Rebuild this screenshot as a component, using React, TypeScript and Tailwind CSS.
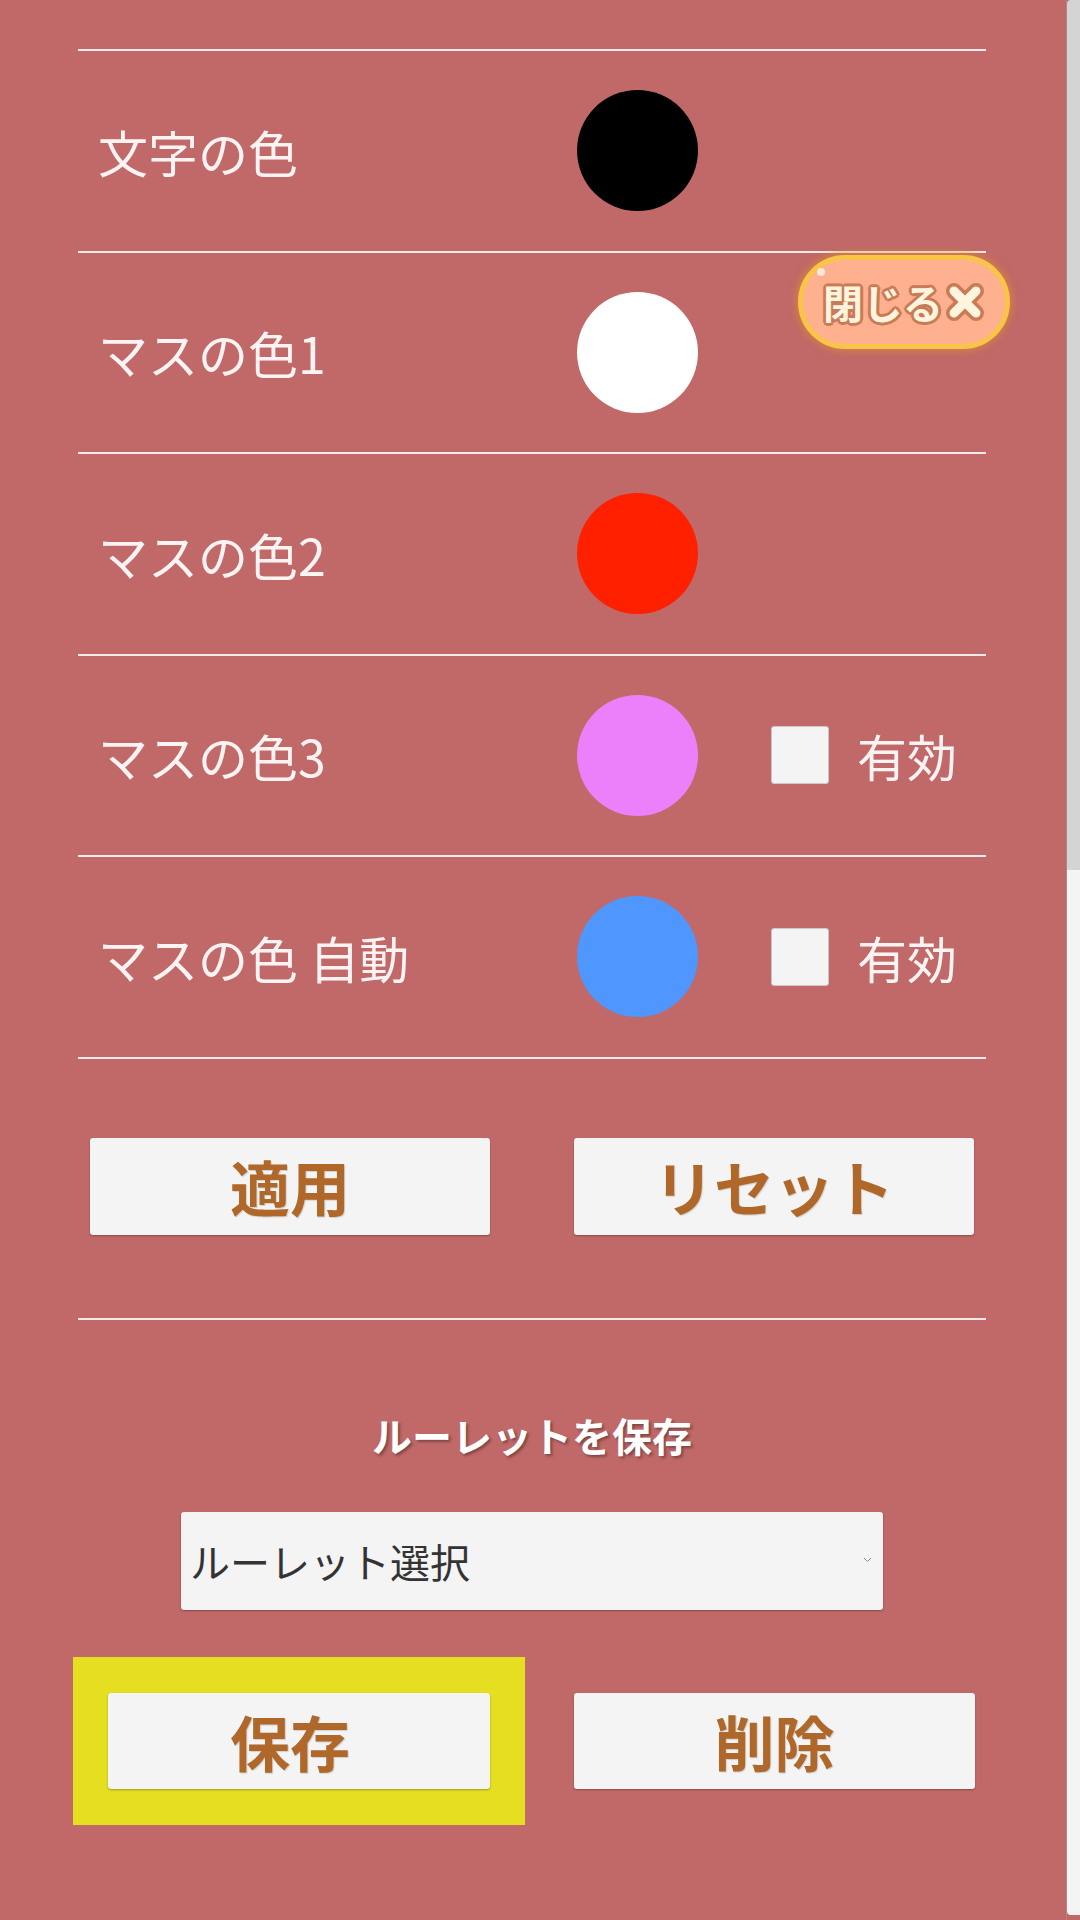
import React from 'react';

interface ColorRow {
  label: string;
  color: string;
  toggle?: boolean;
}

const rows: ColorRow[] = [
  { label: '文字の色', color: '#000000' },
  { label: 'マスの色1', color: '#ffffff' },
  { label: 'マスの色2', color: '#ff2000' },
  { label: 'マスの色3', color: '#ec7ffa', toggle: true },
  { label: 'マスの色 自動', color: '#4f97ff', toggle: true },
];

const ActionButton: React.FC<{ label: string; className?: string }> = ({ label, className = '' }) => (
  <button
    className={`flex items-center justify-center rounded-[3px] bg-[#f4f4f4] text-[60px] font-bold leading-none text-[#b0682a] shadow-[0_1px_2px_rgba(0,0,0,0.3)] [text-shadow:1px_1px_1px_rgba(0,0,0,0.15)] ${className}`}
  >
    {label}
  </button>
);

const App: React.FC = () => {
  return (
    <div className="relative flex h-[1920px] w-[1080px] overflow-hidden bg-[#c06968] font-['Noto_Sans_CJK_JP','Noto_Sans',sans-serif]">
      <div className="flex-1 pl-[78px] pr-[80px] pt-[49px]">
        <div className="h-[2px] bg-[#f7eaea]" />

        {rows.map((row) => (
          <div key={row.label} className="flex h-[201.5px] items-center border-b-2 border-[#f7eaea]">
            <div className="w-[499px] pl-[20px] text-[50px] leading-none text-[#fdf3f3]">{row.label}</div>
            <div
              className="h-[121px] w-[121px] shrink-0 rounded-full"
              style={{ backgroundColor: row.color }}
            />
            {row.toggle && (
              <div className="ml-[73px] flex items-center">
                <div className="h-[58px] w-[58px] rounded-[3px] border border-[#c9c9c9] bg-[#f4f4f4]" />
                <span className="ml-[28px] text-[50px] leading-none text-[#fdf3f3]">有効</span>
              </div>
            )}
          </div>
        ))}

        <div className="flex justify-between px-[12px] pt-[79px]">
          <ActionButton label="適用" className="h-[97px] w-[400px]" />
          <ActionButton label="リセット" className="h-[97px] w-[400px]" />
        </div>

        <div className="mt-[83px] h-[2px] bg-[#f7eaea]" />

        <div className="mt-[87px] text-center text-[40px] font-bold leading-[56px] text-white [text-shadow:2px_2px_3px_rgba(0,0,0,0.35)]">
          ルーレットを保存
        </div>

        <div className="relative mx-auto mt-[49px] h-[98px] w-[702px]">
          <select className="h-full w-full appearance-none rounded-[3px] bg-[#f4f4f4] pl-[9px] text-[40px] text-[#333333] shadow-[0_1px_2px_rgba(0,0,0,0.3)] outline-none">
            <option>ルーレット選択</option>
          </select>
          <svg className="pointer-events-none absolute right-[11px] top-[45px]" width="9" height="6" viewBox="0 0 9 6">
            <path d="M1 1l3.5 3.5L8 1" fill="none" stroke="#888" strokeWidth="1" />
          </svg>
        </div>

        <div className="ml-[-5px] mt-[47px] flex items-center">
          <div className="bg-[#e6de20] px-[35px] py-[36px]">
            <ActionButton label="保存" className="h-[96px] w-[382px] pr-[18px]" />
          </div>
          <ActionButton label="削除" className="ml-[49px] h-[96px] w-[401px]" />
        </div>
      </div>

      {/* scroll strip */}
      <div className="flex w-[14px] flex-col border-l border-[#a88a8a] pb-[5px]">
        <div className="h-[870px] rounded-tl-[4px] bg-[#d4d4d4]" />
        <div className="flex-1 rounded-bl-[4px] bg-[#f4f4f4]" />
      </div>

      {/* close overlay */}
      <button className="absolute left-[798px] top-[255px] flex h-[94px] w-[212px] items-center justify-center rounded-full border-[5px] border-[#f8c548] bg-[#ffb08e] shadow-[0_0_6px_3px_rgba(226,140,50,0.55)]">
        <span className="absolute left-[14px] top-[8px] h-[8px] w-[8px] rounded-full bg-white/70" />
        <span className="text-[40px] font-bold leading-none text-[#fff4de] [text-shadow:3px_0_0_#c97a56,-3px_0_0_#c97a56,0_3px_0_#c97a56,0_-3px_0_#c97a56,2px_2px_0_#c97a56,-2px_-2px_0_#c97a56,2px_-2px_0_#c97a56,-2px_2px_0_#c97a56]">
          閉じる
        </span>
        <svg className="ml-[2px]" width="40" height="40" viewBox="0 0 40 40">
          <path d="M9 9L31 31M31 9L9 31" stroke="#c97a56" strokeWidth="16" strokeLinecap="round" />
          <path d="M9 9L31 31M31 9L9 31" stroke="#fff4de" strokeWidth="9" strokeLinecap="round" />
        </svg>
      </button>
    </div>
  );
};

export default App;
